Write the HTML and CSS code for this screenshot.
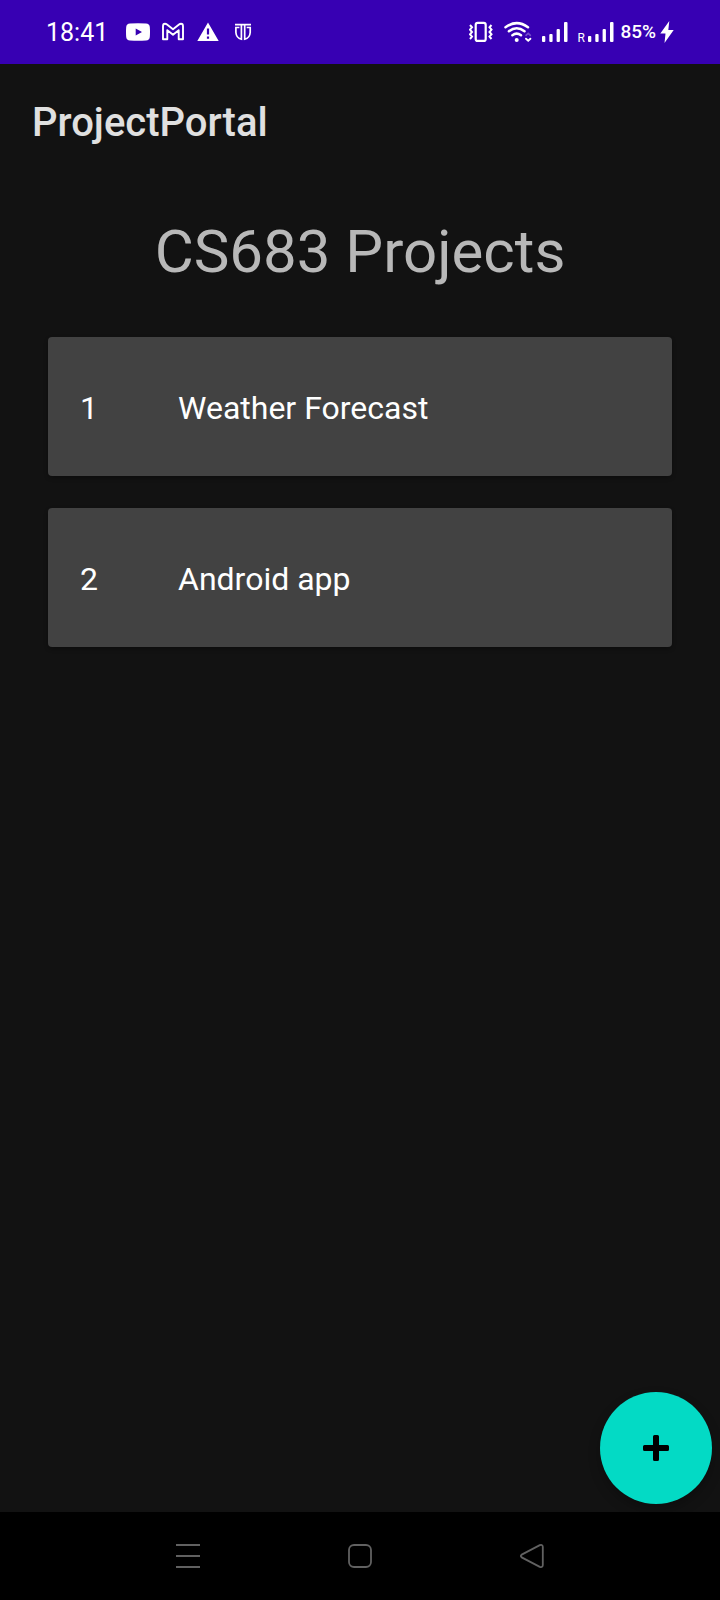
FILE: index.html
```html
<!DOCTYPE html>
<html lang="en">
<head>
<meta charset="utf-8">
<meta name="viewport" content="width=device-width, initial-scale=1">
<title>ProjectPortal</title>
<link rel="stylesheet" href="styles.css">
</head>
<body>
<div class="screen">
  <div class="status">
    <div class="status-left">
      <time class="clock">18:41</time>
      <svg class="icon" viewBox="0 0 24 24" fill="#fff"><path fill-rule="evenodd" d="M4 3.500Q12 2.800 20 3.500Q23.500 3.800 23.800 7Q24.200 12 23.800 17Q23.500 20.200 20 20.500Q12 21.200 4 20.500Q.5 20.200 .2 17Q-.2 12 .2 7Q.5 3.800 4 3.500ZM9.700 8.500V15.500L16 12Z"/></svg>
      <svg class="icon" viewBox="0 0 24 24" fill="none" stroke="#fff" stroke-width="1.900" stroke-linejoin="round"><path d="M2 19.300V6.200Q2 3.800 4 3.800Q5 3.800 6 4.600L12 9.300L18 4.600Q19 3.800 20 3.800Q22 3.800 22 6.200V19.300H17.700V10.200L12 14.700L6.300 10.200V19.300Z"/></svg>
      <svg class="icon" viewBox="0 0 24 24" fill="#fff"><path fill-rule="evenodd" d="M12 2.500L22.700 21H1.300ZM10.900 8.500V14.500H13.100V8.500ZM10.900 16.500V18.700H13.100V16.500Z"/></svg>
      <svg class="icon" viewBox="0 0 24 24" fill="none" stroke="#fff" stroke-width="1.700"><path d="M4 4.700H20M10.400 4.700V17M13.700 4.700V17M8.400 7.500H4.900V12.500Q5.300 18 10.400 19.200V16M15.700 7.500H19.200V12.500Q18.800 18 13.700 19.200V16"/></svg>
    </div>
    <div class="status-right">
      <svg class="icon vibrate" viewBox="0 0 24 24" fill="none" stroke="#fff" stroke-width="2.200"><rect x="6.700" y="2.900" width="10" height="18" rx="2"/><path d="M1 5L3 7.300L1 9.600L3 12L1 14.300L3 16.600L1 19M22.500 5L20.500 7.300L22.500 9.600L20.500 12L22.500 14.300L20.500 16.600L22.500 19" stroke-width="2"/></svg>
      <svg class="icon wifi" viewBox="0 0 28 24" fill="none" stroke="#fff" stroke-width="2.500" stroke-linecap="round"><path d="M1.500 7.200Q12.700-1 24 7.200M4.900 11.300Q12.700 5.300 20.500 11.300M8.400 15.200Q12.700 12 17 15.200"/><circle cx="12.700" cy="20" r="2" fill="#fff" stroke="none"/><path d="M22 18.700L24.200 20.700L26.400 18.700" stroke-width="1.900"/><path d="M22 15.300L24.200 13.300L26.400 15.300" stroke-width="1.600" opacity=".3"/></svg>
      <svg class="icon signal" viewBox="0 0 26 24" fill="#fff"><rect y="16" width="3.300" height="6" rx="1"/><rect x="7.300" y="14" width="3.300" height="8" rx="1"/><rect x="14.600" y="9" width="3.300" height="13" rx="1"/><rect x="22" y="2" width="3.500" height="20" rx="1"/></svg>
      <span class="roaming">R</span>
      <svg class="icon signal" viewBox="0 0 26 24" fill="#fff"><rect y="16" width="3.300" height="6" rx="1"/><rect x="7.300" y="14" width="3.300" height="8" rx="1"/><rect x="14.600" y="9" width="3.300" height="13" rx="1"/><rect x="22" y="2" width="3.500" height="20" rx="1"/></svg>
      <span class="battery">85%</span>
      <svg class="icon bolt" viewBox="0 0 14 24" fill="#fff"><path d="M9.300 1L.3 13.500H5.500L4.500 23L13.700 10H8.300Z"/></svg>
    </div>
  </div>
  <header class="appbar"><h1 class="app-title">ProjectPortal</h1></header>
  <main class="content">
    <h2 class="heading">CS683 Projects</h2>
    <ol class="projects">
      <li class="card"><span class="number">1</span><span class="name">Weather Forecast</span></li>
      <li class="card"><span class="number">2</span><span class="name">Android app</span></li>
    </ol>
    <button class="fab" type="button" aria-label="Add project">
      <svg class="plus" viewBox="0 0 26 26"><path d="M1.500 10H10V1.500Q10 0 11.500 0H14.500Q16 0 16 1.500V10H24.500Q26 10 26 11.500V14.500Q26 16 24.500 16H16V24.500Q16 26 14.500 26H11.500Q10 26 10 24.500V16H1.500Q0 16 0 14.500V11.500Q0 10 1.500 10Z"/></svg>
    </button>
  </main>
  <nav class="navbar">
    <button class="nav-button" type="button" aria-label="Recent apps"><svg class="icon" viewBox="0 0 24 24" fill="none" stroke="#616161" stroke-width="2"><path d="M0 1H24M0 12H24M0 23H24"/></svg></button>
    <button class="nav-button" type="button" aria-label="Home"><svg class="icon" viewBox="0 0 24 24" fill="none" stroke="#616161" stroke-width="1.800"><rect x="1" y="1" width="22" height="22" rx="5"/></svg></button>
    <button class="nav-button" type="button" aria-label="Back"><svg class="icon" viewBox="0 0 24 24" fill="none" stroke="#616161" stroke-width="1.800"><path d="M1.700 10.600L19.800 1.200Q22.800 .2 22.800 3V21Q22.800 23.800 19.800 22.800L1.700 13.400Q0 12 1.700 10.600Z"/></svg></button>
  </nav>
</div>
</body>
</html>
```
FILE: styles.css
```css
* {
  box-sizing: border-box;
}

body {
  margin: 0;
  background: #121212;
  color: #fff;
  font-family: Roboto, "Liberation Sans", sans-serif;
}

.screen {
  display: flex;
  flex-direction: column;
  min-height: 100vh;
}

.icon {
  display: block;
  flex: none;
  width: 24px;
  height: 24px;
}

.status {
  display: flex;
  align-items: center;
  justify-content: space-between;
  height: 64px;
  padding: 0 46px;
  background: #3700b3;
}

.status-left,
.status-right {
  display: flex;
  align-items: center;
}

.status-left {
  gap: 11px;
}

.clock {
  width: 69px;
  padding-top: 2px;
  font-size: 25px;
  line-height: 32px;
}

.vibrate {
  margin-right: 11px;
}

.wifi {
  width: 28px;
  margin-right: 10px;
}

.signal {
  width: 26px;
}

.roaming {
  align-self: flex-end;
  width: 11px;
  margin-left: 9px;
  font-size: 12px;
  line-height: 12px;
}

.battery {
  margin: 0 4px 0 6px;
  font-size: 19px;
  font-weight: 500;
  line-height: 24px;
}

.bolt {
  width: 14px;
}

.appbar {
  display: flex;
  align-items: center;
  height: 112px;
  padding: 6px 32px 0;
}

.app-title {
  margin: 0;
  color: #e0e0e0;
  font-size: 40px;
  font-weight: 500;
  line-height: 48px;
}

.content {
  position: relative;
  flex: 1;
  padding: 40px 48px;
}

.heading {
  margin: 0 0 49px;
  color: #b8b8b8;
  font-size: 60px;
  font-weight: 400;
  line-height: 72px;
  text-align: center;
}

.projects {
  display: grid;
  gap: 32px;
  margin: 0;
  padding: 0;
  list-style: none;
}

.card {
  display: flex;
  padding: 52px 32px 49px;
  border-radius: 4px;
  background: #424242;
  box-shadow: 0 2px 4px rgba(0, 0, 0, 0.3);
  font-size: 32px;
  line-height: 38px;
}

.number {
  flex: none;
  width: 98px;
}

.fab {
  position: absolute;
  right: 8px;
  bottom: 8px;
  display: grid;
  place-items: center;
  width: 112px;
  height: 112px;
  padding: 0;
  border: 0;
  border-radius: 50%;
  background: #03dac5;
  box-shadow: 0 6px 12px rgba(0, 0, 0, 0.25);
}

.plus {
  width: 26px;
  height: 26px;
}

.navbar {
  z-index: 1;
  display: flex;
  justify-content: center;
  height: 88px;
  background: #000;
}

.nav-button {
  display: grid;
  place-items: center;
  width: 172px;
  padding: 0;
  border: 0;
  background: none;
}
```
